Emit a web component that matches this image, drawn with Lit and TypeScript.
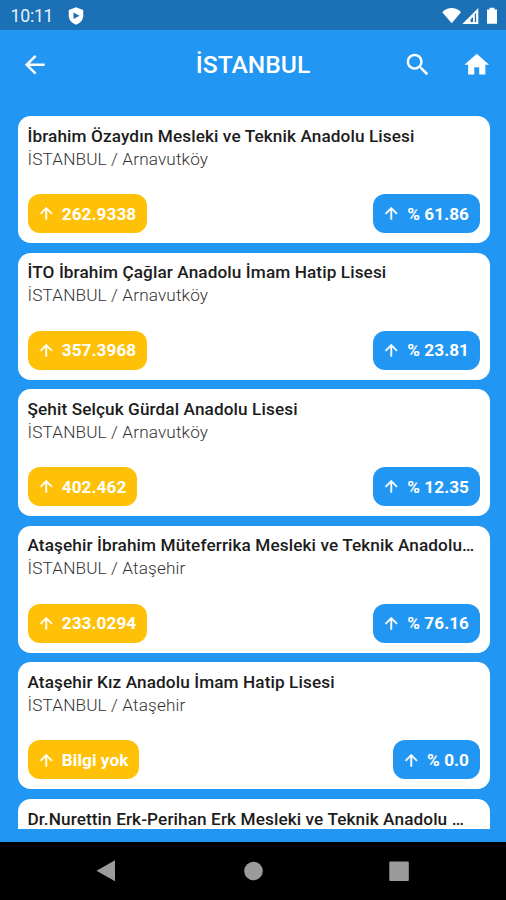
import { LitElement, html, css, svg } from "lit";
import { customElement, property } from "lit/decorators.js";

interface School {
  name: string;
  place: string;
  score?: string;
  percent?: string;
}

const schools: School[] = [
  { name: "İbrahim Özaydın Mesleki ve Teknik Anadolu Lisesi", place: "İSTANBUL / Arnavutköy", score: "262.9338", percent: "% 61.86" },
  { name: "İTO İbrahim Çağlar Anadolu İmam Hatip Lisesi", place: "İSTANBUL / Arnavutköy", score: "357.3968", percent: "% 23.81" },
  { name: "Şehit Selçuk Gürdal Anadolu Lisesi", place: "İSTANBUL / Arnavutköy", score: "402.462", percent: "% 12.35" },
  { name: "Ataşehir İbrahim Müteferrika Mesleki ve Teknik Anadolu…", place: "İSTANBUL / Ataşehir", score: "233.0294", percent: "% 76.16" },
  { name: "Ataşehir Kız Anadolu İmam Hatip Lisesi", place: "İSTANBUL / Ataşehir", score: "Bilgi yok", percent: "% 0.0" },
  { name: "Dr.Nurettin Erk-Perihan Erk Mesleki ve Teknik Anadolu …", place: "" },
];

const paths = {
  back: svg`<path d="M20 11H7.83l5.59-5.59L12 4l-8 8 8 8 1.41-1.41L7.83 13H20v-2z"/>`,
  up: svg`<path d="M4 12l1.41 1.41L11 7.83V20h2V7.83l5.58 5.59L20 12l-8-8-8 8z"/>`,
  search: svg`<path d="M15.5 14h-.79l-.28-.27C15.41 12.59 16 11.11 16 9.5 16 5.91 13.09 3 9.5 3S3 5.91 3 9.5 5.91 16 9.5 16c1.61 0 3.09-.59 4.23-1.57l.27.28v.79l5 4.99L20.49 19l-4.99-5zm-6 0C7.01 14 5 11.99 5 9.5S7.01 5 9.5 5 14 7.01 14 9.5 11.99 14 9.5 14z"/>`,
  home: svg`<path d="M10 20v-6h4v6h5v-8h3L12 3 2 12h3v8z"/>`,
};

@customElement("school-card")
class SchoolCard extends LitElement {
  @property({ attribute: false }) school!: School;

  static styles = css`
    :host {
      display: block;
      flex: none;
      box-sizing: border-box;
      height: 127px;
      padding: 8.6px 10.5px 10px 10px;
      border-radius: 12.5px;
      background: #fff;
    }
    .body { display: flex; flex-direction: column; height: 100%; }
    .name, .place { white-space: nowrap; font-size: 17.2px; }
    .name { line-height: 22px; font-weight: 500; letter-spacing: 0.1px; color: #1c1c1c; }
    .place { line-height: 25.8px; font-weight: 300; letter-spacing: 0.13px; color: #333; }
    .badges { display: flex; justify-content: space-between; margin-top: auto; }
    .badge {
      display: flex;
      align-items: center;
      gap: 6.3px;
      box-sizing: border-box;
      height: 39px;
      padding: 0 10.5px 0 9.5px;
      border-radius: 12px;
      font-size: 17.2px;
      font-weight: 700;
      letter-spacing: 0.05px;
      color: #fff;
    }
    .score { background: #ffc107; }
    .percent { background: #2196f3; }
    .arrow { width: 18.5px; height: 18.5px; fill: #fff; stroke: #fff; stroke-width: 0.5; }
  `;

  badge(kind: string, text: string) {
    return html`<div class="badge ${kind}">
      <svg class="arrow" viewBox="0 0 24 24">${paths.up}</svg><span>${text}</span>
    </div>`;
  }

  render() {
    const s = this.school;
    return html`<div class="body">
      <div class="name">${s.name}</div>
      ${s.place ? html`<div class="place">${s.place}</div>` : ""}
      ${s.score && s.percent
        ? html`<div class="badges">${this.badge("score", s.score)}${this.badge("percent", s.percent)}</div>`
        : ""}
    </div>`;
  }
}

@customElement("app-root")
class AppRoot extends LitElement {
  static styles = css`
    :host {
      display: flex;
      flex-direction: column;
      width: 506px;
      height: 900px;
      overflow: hidden;
      background: #2196f3;
      color: #fff;
      font-family: Roboto, "Noto Sans", sans-serif;
    }
    .status {
      display: flex;
      align-items: center;
      flex: none;
      box-sizing: border-box;
      height: 30px;
      padding: 1px 8px 0 10.5px;
      background: #1b70b6;
    }
    .time { width: 57.5px; font-size: 17.6px; letter-spacing: -0.2px; color: #e8f1f8; }
    .shield { width: 16px; height: 18px; }
    .signals { width: 56px; height: 18px; margin-left: auto; }
    .bar {
      display: grid;
      grid-template-columns: 148px 1fr 148px;
      align-items: center;
      flex: none;
      height: 69px;
    }
    .icon { display: block; width: 29.5px; height: 29.5px; fill: #fff; }
    .back { margin-left: 20px; }
    .title { font-size: 24.6px; font-weight: 500; text-align: center; white-space: nowrap; }
    .actions { display: flex; justify-content: flex-end; gap: 30px; padding-right: 14.5px; }
    .list {
      display: flex;
      flex-direction: column;
      gap: 9.6px;
      flex: none;
      box-sizing: border-box;
      height: 730px;
      padding: 17px 16px 0 17.5px;
      overflow: hidden;
    }
    .nav {
      display: flex;
      justify-content: center;
      align-items: center;
      flex: none;
      height: 58px;
      margin-top: 13px;
      background: #000;
    }
    .keys { width: 320px; height: 22px; fill: #9b9b9b; }
  `;

  render() {
    return html`
      <div class="status">
        <span class="time">10:11</span>
        <svg class="shield" viewBox="0 0 16 18">
          <path fill="#fff" d="M8 .3 15.2 3v6c0 4-3 7-7.2 8.700C3.800 16 .8 13 .8 9V3z"/>
          <path fill="#1b70b6" d="M5.500 5.600 11.500 8.800 5.500 12z"/>
        </svg>
        <svg class="signals" viewBox="0 0 56 18" fill="#fff">
          <path d="M.3 5.300C5.800-.3 13.500-.3 19 5.300L9.700 16.300z"/>
          <path d="M36.300 1v16H20.300z"/>
          <path fill="#1b70b6" d="M28.500 12.500l2.500-2.500v5h-2.500zM32.800 6.500h1.300v8.500h-1.300z"/>
          <path d="M47.500.8h5v1.700H55v14.300H45V2.500h2.500z"/>
        </svg>
      </div>
      <div class="bar">
        <svg class="icon back" viewBox="0 0 24 24">${paths.back}</svg>
        <div class="title">İSTANBUL</div>
        <div class="actions">
          <svg class="icon" viewBox="0 0 24 24">${paths.search}</svg>
          <svg class="icon" viewBox="0 0 24 24">${paths.home}</svg>
        </div>
      </div>
      <div class="list">
        ${schools.map((s) => html`<school-card .school=${s}></school-card>`)}
      </div>
      <div class="nav">
        <svg class="keys" viewBox="0 0 320 22">
          <path d="M22 .3v21L3.500 10.800z"/>
          <circle cx="160.500" cy="11" r="9.300"/>
          <rect x="296.300" y="1.500" width="19.500" height="19.500" rx="1"/>
        </svg>
      </div>
    `;
  }
}
